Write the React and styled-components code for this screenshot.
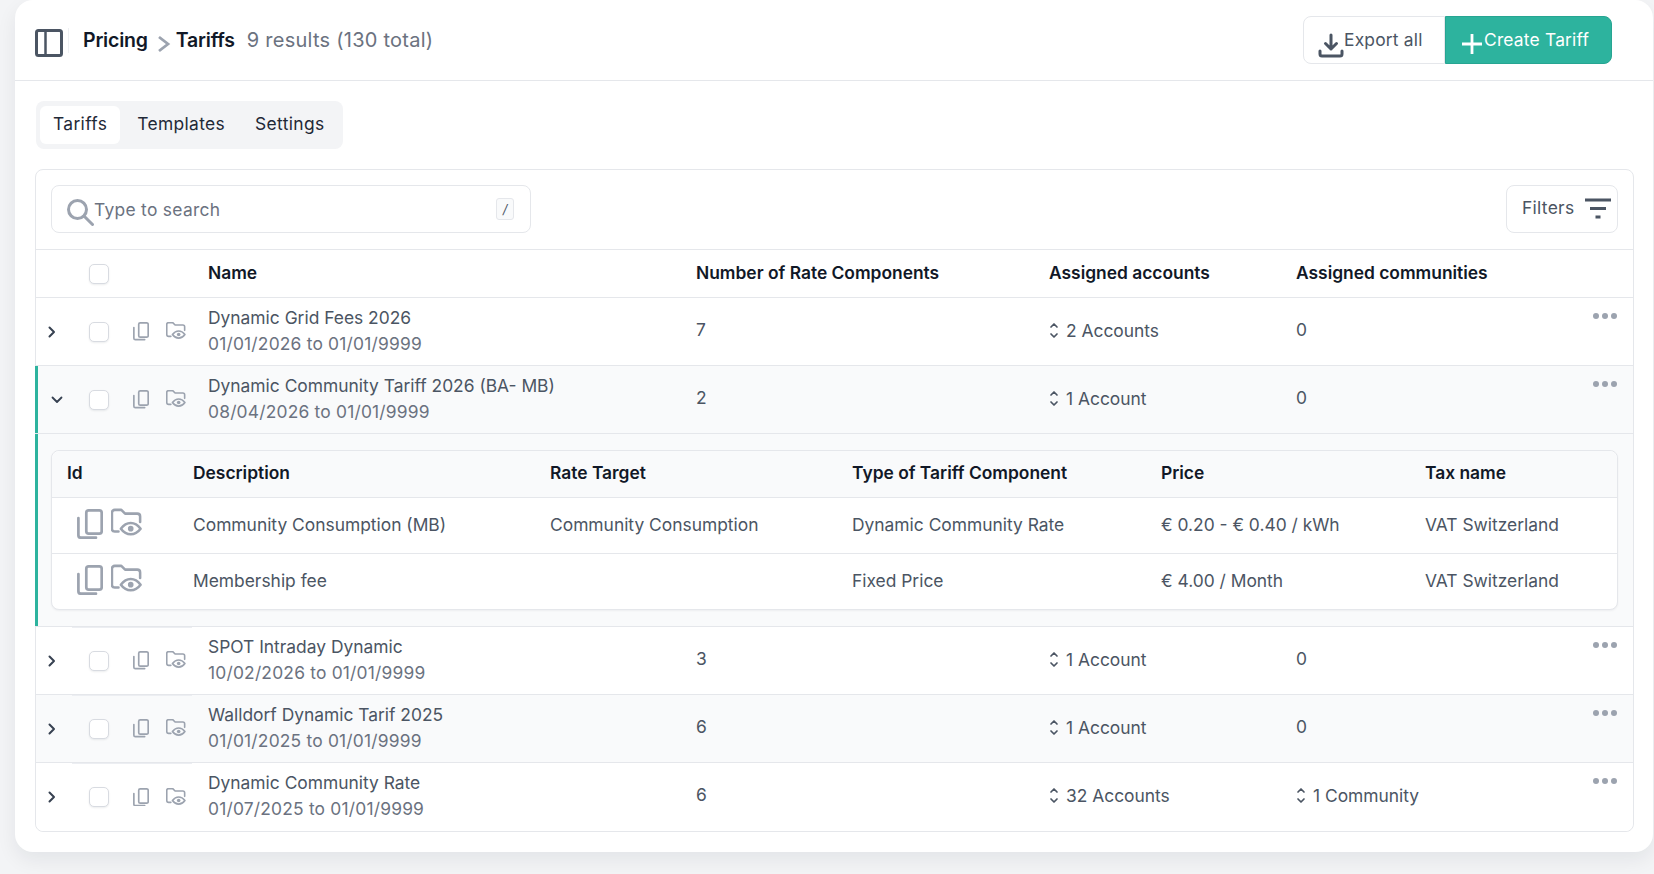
import styled, { createGlobalStyle } from 'styled-components';

const GlobalStyle = createGlobalStyle`
    * {
        box-sizing: border-box;
    }
    html, body {
        margin: 0;
        padding: 0;
        height: 100%;
        background: #f3f4f6;
        font-family: "Inter", "Noto Sans", sans-serif;
        font-size: 17.4px;
        color: #4b5563;
    }
`;

const Page = styled.div`
    height: 874px;
    padding: 0 1px 22px 15px;
    overflow: hidden;
`;

const Card = styled.div`
    height: 852px;
    background: #fff;
    border-radius: 18px;
    box-shadow: 0 8px 20px rgba(17, 24, 39, 0.07);
`;

const Header = styled.header`
    height: 81px;
    display: flex;
    align-items: center;
    justify-content: space-between;
    padding: 0 41px 0 20px;
    border-bottom: 1px solid #e5e7eb;
`;

const HeaderLeft = styled.div`
    display: flex;
    align-items: center;
`;

const SidebarIcon = styled.svg`
    width: 28px;
    height: 28px;
    margin-top: 5px;
`;

const VRule = styled.span`
    width: 1px;
    height: 25px;
    background: #eef0f3;
    margin: 0 14px 0 5px;
`;

const Crumb = styled.span`
    font-size: 19.5px;
    font-weight: 600;
    letter-spacing: -0.2px;
    color: #111827;
`;

const CrumbSep = styled.svg`
    width: 14px;
    height: 18px;
    margin: 8px 5px 0 9px;
`;

const ResultCount = styled.span`
    font-size: 20px;
    letter-spacing: 0.25px;
    color: #6b7280;
    margin-left: 12px;
`;

const ButtonGroup = styled.div`
    display: flex;
`;

const Button = styled.button`
    height: 48px;
    display: flex;
    align-items: flex-start;
    font: inherit;
    letter-spacing: 0.2px;
    border: 1px solid ${({ $primary }) => ($primary ? '#27a592' : '#e5e7eb')};
    background: ${({ $primary }) => ($primary ? '#2db39e' : '#fff')};
    color: ${({ $primary }) => ($primary ? '#fff' : '#4b5563')};
    border-radius: ${({ $primary }) => ($primary ? '0 8px 8px 0' : '8px 0 0 8px')};
    width: ${({ $primary }) => ($primary ? '167px' : '142px')};
    padding: 12px 0 0 14px;
    line-height: 22px;

    svg {
        flex: none;
        margin-top: 3px;
    }
`;

const Content = styled.div`
    padding: 20px 19px 0 20px;
`;

const Tabs = styled.div`
    display: inline-flex;
    gap: 4px;
    margin-left: 1px;
    padding: 5px 6px 5px 4px;
    background: #f3f4f6;
    border-radius: 8px;
    margin-bottom: 20px;
`;

const Tab = styled.div`
    height: 38px;
    padding: 0 13px 4px;
    display: flex;
    align-items: center;
    border-radius: 6px;
    letter-spacing: 0.35px;
    color: #1f2937;
    background: ${({ $active }) => ($active ? '#fff' : 'transparent')};
`;

const Panel = styled.div`
    border: 1px solid #e5e7eb;
    border-radius: 8px;
`;

const Toolbar = styled.div`
    height: 80px;
    display: flex;
    align-items: center;
    justify-content: space-between;
    padding: 0 15px 1px 15px;
    border-bottom: 1px solid #e5e7eb;
`;

const Search = styled.div`
    width: 480px;
    height: 48px;
    display: flex;
    align-items: center;
    padding: 0 16px 0 14px;
    border: 1px solid #e5e7eb;
    border-radius: 8px;
    color: #6b7280;

    span {
        flex: 1;
        letter-spacing: 0.3px;
    }
`;

const Kbd = styled.kbd`
    width: 18px;
    height: 22px;
    display: flex;
    align-items: center;
    justify-content: center;
    font-family: inherit;
    font-size: 13px;
    font-style: italic;
    color: #4b5563;
    background: #f9fafb;
    border: 1px solid #e5e7eb;
    border-radius: 3px;
`;

const FilterButton = styled.div`
    width: 112px;
    height: 48px;
    display: flex;
    align-items: center;
    justify-content: space-between;
    padding: 0 5px 0 15px;
    border: 1px solid #e5e7eb;
    border-radius: 8px;

    span {
        margin-top: -3px;
        letter-spacing: 0.3px;
    }
`;

const MainGrid = styled.div`
    display: grid;
    grid-template-columns: 53px 31px 88px 488px 353px 247px 297px 1fr;
    align-items: center;
    position: relative;
    background: ${({ $tinted }) => ($tinted ? '#f9fafb' : '#fff')};
`;

const HeadRow = styled(MainGrid)`
    height: 48px;
    border-bottom: 1px solid #e5e7eb;
`;

const BodyRow = styled(MainGrid)`
    height: 68px;
    border-bottom: 1px solid #e5e7eb;

    &:last-child {
        border-bottom: 0;
        border-radius: 0 0 8px 8px;
    }

    ${({ $seam }) => $seam && `
        &::before {
            content: '';
            position: absolute;
            top: 0;
            left: 36px;
            width: 120px;
            height: 1px;
            background: #eceef2;
        }
    `}
`;

const HeadCell = styled.div`
    font-weight: 600;
    margin-top: -2px;
    color: #111827;
`;

const Accent = styled.span`
    position: absolute;
    left: -1px;
    top: 0;
    bottom: 0;
    width: 3px;
    background: #2db39e;
`;

const Expander = styled.div`
    padding-left: ${({ $open }) => ($open ? '15px' : '12px')};
    display: flex;
    align-items: center;
`;

const Checkbox = styled.span`
    display: block;
    width: 20px;
    height: 20px;
    background: #fff;
    border: 1px solid #d8dbe1;
    border-radius: 5px;
    box-shadow: 0 1px 2px rgba(17, 24, 39, 0.08);
`;

const RowIcons = styled.div`
    display: flex;
    align-items: center;
    gap: 17px;
    padding-left: 13px;
`;

const NameCell = styled.div`
    line-height: 26px;
    margin-top: -2px;
`;

const Dates = styled.div`
    letter-spacing: 0.2px;
    color: #6b7280;
`;

const ValueCell = styled.div`
    margin-top: -5px;
`;

const LinkCell = styled.div`
    display: flex;
    align-items: center;
    gap: 7px;
    margin-top: -3px;
`;

const DotsCell = styled.div`
    align-self: start;
    display: flex;
    gap: 3px;
    padding-top: 15px;
`;

const Dot = styled.span`
    width: 6px;
    height: 6px;
    border-radius: 50%;
    background: #9ca3af;
`;

const Expanded = styled.div`
    position: relative;
    height: 193px;
    padding: 16px 15px 16px 15px;
    background: #f9fafb;
    border-bottom: 1px solid #e5e7eb;
`;

const SubTable = styled.div`
    border: 1px solid #e5e7eb;
    border-radius: 8px;
    background: #fff;
    box-shadow: 0 1px 2px rgba(17, 24, 39, 0.05);
`;

const SubGrid = styled.div`
    display: grid;
    grid-template-columns: 141px 357px 302px 309px 264px 1fr;
    align-items: center;
`;

const SubHead = styled(SubGrid)`
    height: 47px;
    padding-bottom: 2px;
    background: #f9fafb;
    border-bottom: 1px solid #e5e7eb;
    border-radius: 8px 8px 0 0;

    ${HeadCell}:first-child {
        padding-left: 15px;
    }
`;

const SubRow = styled(SubGrid)`
    height: 56px;
    border-bottom: 1px solid #e5e7eb;

    &:last-child {
        height: 55px;
        border-bottom: 0;
    }
`;

const SubCell = styled.div`
    margin-top: -2px;
`;

const SubIcons = styled.div`
    display: flex;
    align-items: center;
    gap: 8px;
    padding-left: 25px;
    margin-top: -4px;
`;

const tariffs = [
    { name: 'Dynamic Grid Fees 2026', dates: '01/01/2026 to 01/01/9999', components: 7, accounts: '2 Accounts', communities: '0' },
    { name: 'Dynamic Community Tariff 2026 (BA- MB)', dates: '08/04/2026 to 01/01/9999', components: 2, accounts: '1 Account', communities: '0', open: true, tinted: true },
    { name: 'SPOT Intraday Dynamic', dates: '10/02/2026 to 01/01/9999', components: 3, accounts: '1 Account', communities: '0', seam: true },
    { name: 'Walldorf Dynamic Tarif 2025', dates: '01/01/2025 to 01/01/9999', components: 6, accounts: '1 Account', communities: '0', tinted: true, seam: true },
    { name: 'Dynamic Community Rate', dates: '01/07/2025 to 01/01/9999', components: 6, accounts: '32 Accounts', communities: '1 Community', link: true, seam: true },
];

const rateComponents = [
    { description: 'Community Consumption (MB)', target: 'Community Consumption', type: 'Dynamic Community Rate', price: '€ 0.20 - € 0.40 / kWh', tax: 'VAT Switzerland' },
    { description: 'Membership fee', target: '', type: 'Fixed Price', price: '€ 4.00 / Month', tax: 'VAT Switzerland' },
];

const CopyIcon = ({ w = 16, h = 18.5 }) => (
    <svg width={w} height={h} viewBox="0 0 26 30" fill="none" stroke="#9ca3af" strokeWidth="2.7" strokeLinecap="round" strokeLinejoin="round">
        <rect x="9.3" y="1.4" width="15.4" height="23.2" rx="2.4" />
        <path d="M1.4 9v17.2a2.5 2.5 0 0 0 2.5 2.5H19" />
    </svg>
);

const FolderEyeIcon = ({ w = 20, h = 18.5 }) => (
    <svg width={w} height={h} viewBox="0 0 33 31" fill="none" stroke="#9ca3af" strokeWidth="2.7" strokeLinecap="round" strokeLinejoin="round">
        <path d="M8 24H4a3 3 0 0 1-3-3V4a3 3 0 0 1 3-3h7l4 4h13a3 3 0 0 1 3 3v6" />
        <path d="M10.5 21c3-4 6.500-6 10.500-6s7.500 2 10.500 6c-3 4-6.500 6-10.500 6s-7.500-2-10.500-6z" />
        <circle cx="21" cy="21" r="3" fill="#9ca3af" stroke="none" />
    </svg>
);

const SortIcon = () => (
    <svg width="10" height="17" viewBox="0 0 10 17" fill="none" stroke="#4b5563" strokeWidth="1.7" strokeLinecap="round" strokeLinejoin="round">
        <path d="M2 5l3-3 3 3" />
        <path d="M2 12l3 3 3-3" />
    </svg>
);

const Chevron = ({ open }) =>
    open ? (
        <svg width="12" height="8" viewBox="0 0 12 8" fill="none" stroke="#374151" strokeWidth="1.8" strokeLinecap="round" strokeLinejoin="round">
            <path d="M1.500 1.500L6 6l4.500-4.500" />
        </svg>
    ) : (
        <svg width="8" height="12" viewBox="0 0 8 12" fill="none" stroke="#374151" strokeWidth="2" strokeLinecap="round" strokeLinejoin="round">
            <path d="M1.500 1.500L6 6l-4.500 4.500" />
        </svg>
    );

const TariffRow = ({ tariff }) => (
    <BodyRow $tinted={tariff.tinted} $seam={tariff.seam}>
        {tariff.open && <Accent />}
        <Expander $open={tariff.open}>
            <Chevron open={tariff.open} />
        </Expander>
        <Checkbox />
        <RowIcons>
            <CopyIcon />
            <FolderEyeIcon />
        </RowIcons>
        <NameCell>
            <div>{tariff.name}</div>
            <Dates>{tariff.dates}</Dates>
        </NameCell>
        <ValueCell>{tariff.components}</ValueCell>
        <LinkCell>
            <SortIcon />
            {tariff.accounts}
        </LinkCell>
        {tariff.link ? (
            <LinkCell>
                <SortIcon />
                {tariff.communities}
            </LinkCell>
        ) : (
            <ValueCell>{tariff.communities}</ValueCell>
        )}
        <DotsCell>
            <Dot />
            <Dot />
            <Dot />
        </DotsCell>
    </BodyRow>
);

const App = () => (
    <>
        <GlobalStyle />
        <Page>
            <Card>
                <Header>
                    <HeaderLeft>
                        <SidebarIcon viewBox="0 0 28 28" fill="none" stroke="#4b5563" strokeWidth="3" strokeLinejoin="round">
                            <rect x="1.500" y="1.500" width="25" height="25" rx="2" />
                            <path d="M10.500 1.500v25" strokeWidth="2.500" />
                        </SidebarIcon>
                        <VRule />
                        <Crumb>Pricing</Crumb>
                        <CrumbSep viewBox="0 0 14 18" fill="none" stroke="#9ca3af" strokeWidth="2.8">
                            <path d="M2 2l9 7-9 7" />
                        </CrumbSep>
                        <Crumb>Tariffs</Crumb>
                        <ResultCount>9 results (130 total)</ResultCount>
                    </HeaderLeft>
                    <ButtonGroup>
                        <Button>
                            <svg width="26" height="26" viewBox="0 0 26 26" fill="none" stroke="#4b5563" strokeWidth="3" strokeLinecap="round" strokeLinejoin="round">
                                <path d="M13 3v14M7.500 11.500L13 17l5.500-5.500" />
                                <path d="M2 19v3a2 2 0 0 0 2 2h18a2 2 0 0 0 2-2v-3" />
                            </svg>
                            Export all
                        </Button>
                        <Button $primary>
                            <svg width="24" height="24" viewBox="0 0 24 24" fill="none" stroke="#fff" strokeWidth="2.800">
                                <path d="M12 2v20M2 12h20" />
                            </svg>
                            Create Tariff
                        </Button>
                    </ButtonGroup>
                </Header>
                <Content>
                    <Tabs>
                        <Tab $active>Tariffs</Tab>
                        <Tab>Templates</Tab>
                        <Tab>Settings</Tab>
                    </Tabs>
                    <Panel>
                        <Toolbar>
                            <Search>
                                <svg width="28" height="28" viewBox="0 0 28 28" fill="none" stroke="#9ca3af" strokeWidth="3" style={{ marginTop: 6 }}>
                                    <circle cx="11.500" cy="11.500" r="9" />
                                    <path d="M18 18l8.500 8.500" strokeLinecap="round" />
                                </svg>
                                <span>Type to search</span>
                                <Kbd>/</Kbd>
                            </Search>
                            <FilterButton>
                                <span>Filters</span>
                                <svg width="28" height="22" viewBox="0 0 28 22" fill="none" stroke="#4b5563" strokeWidth="2.800">
                                    <path d="M1 2h26M6 10.500h16M11.500 19h5" />
                                </svg>
                            </FilterButton>
                        </Toolbar>
                        <HeadRow>
                            <span />
                            <Checkbox />
                            <span />
                            <HeadCell>Name</HeadCell>
                            <HeadCell>Number of Rate Components</HeadCell>
                            <HeadCell>Assigned accounts</HeadCell>
                            <HeadCell>Assigned communities</HeadCell>
                        </HeadRow>
                        <TariffRow tariff={tariffs[0]} />
                        <TariffRow tariff={tariffs[1]} />
                        <Expanded>
                            <Accent />
                            <SubTable>
                                <SubHead>
                                    <HeadCell>Id</HeadCell>
                                    <HeadCell>Description</HeadCell>
                                    <HeadCell>Rate Target</HeadCell>
                                    <HeadCell>Type of Tariff Component</HeadCell>
                                    <HeadCell>Price</HeadCell>
                                    <HeadCell>Tax name</HeadCell>
                                </SubHead>
                                {rateComponents.map((item) => (
                                    <SubRow key={item.description}>
                                        <SubIcons>
                                            <CopyIcon w={26} h={30} />
                                            <FolderEyeIcon w={31} h={31} />
                                        </SubIcons>
                                        <SubCell>{item.description}</SubCell>
                                        <SubCell>{item.target}</SubCell>
                                        <SubCell>{item.type}</SubCell>
                                        <SubCell>{item.price}</SubCell>
                                        <SubCell>{item.tax}</SubCell>
                                    </SubRow>
                                ))}
                            </SubTable>
                        </Expanded>
                        <TariffRow tariff={tariffs[2]} />
                        <TariffRow tariff={tariffs[3]} />
                        <TariffRow tariff={tariffs[4]} />
                    </Panel>
                </Content>
            </Card>
        </Page>
    </>
);

export default App;
